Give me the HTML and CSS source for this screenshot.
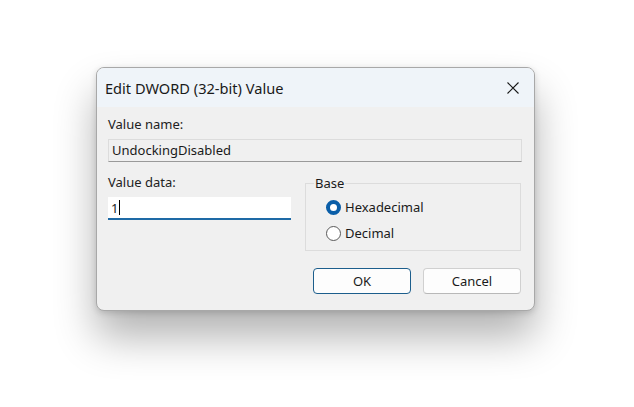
FILE: index.html
```html
<!DOCTYPE html>
<html>
<head>
<meta charset="utf-8">
<link rel="stylesheet" href="styles.css">
</head>
<body>
<div class="dialog">
  <div class="titlebar">
    <span class="title">Edit DWORD (32-bit) Value</span>
    <svg class="close" width="12" height="12" viewBox="0 0 12 12"><path d="M0.5 0.5L11.5 11.5M11.5 0.5L0.5 11.5" stroke="#1a1a1a" stroke-width="1.1" fill="none"/></svg>
  </div>
  <div class="content">
    <div class="label">Value name:</div>
    <div class="namefield">UndockingDisabled</div>
    <div class="row">
      <div class="leftcol">
        <div class="label">Value data:</div>
        <div class="datafield"><span>1</span><span class="caret"></span></div>
      </div>
      <fieldset class="group">
        <legend>Base</legend>
        <div class="radio"><span class="dot checked"></span>Hexadecimal</div>
        <div class="radio"><span class="dot"></span>Decimal</div>
      </fieldset>
    </div>
    <div class="buttons">
      <div class="btn primary">OK</div>
      <div class="btn">Cancel</div>
    </div>
  </div>
</div>
</body>
</html>
```

FILE: styles.css
```css
html, body { margin: 0; background: #ffffff; }
body {
  padding: 67px 0 0 96px;
  font-family: "Noto Sans", "Open Sans", sans-serif;
  color: #1a1a1a;
  height: 407px;
  box-sizing: border-box;
  overflow: hidden;
}
.dialog {
  width: 439px;
  height: 244px;
  box-sizing: border-box;
  border: 1px solid #a8a8a8;
  border-radius: 8px;
  background: #f0f0f0;
  box-shadow: 0 26px 42px rgba(0,0,0,0.3), 0 2px 6px rgba(0,0,0,0.15);
  overflow: hidden;
}
.titlebar {
  height: 39px;
  background: #eff4f9;
  display: flex;
  align-items: center;
  justify-content: space-between;
  padding: 0 15px 0 8px;
}
.title { font-size: 14.6px; color: #1a1a1a; }
.close { display: block; }
.content { padding: 9px 12px 0 11px; }
.label { font-size: 13px; line-height: 16px; color: #222; }
.namefield {
  margin-top: 7px;
  height: 23px;
  box-sizing: border-box;
  border: 1px solid #dcdcdc;
  border-bottom-color: #9a9a9a;
  padding-left: 3px;
  font-size: 13px;
  line-height: 21px;
}
.row {
  display: grid;
  grid-template-columns: 183px 216px;
  column-gap: 14px;
  margin-top: 12px;
}
.datafield {
  margin-top: 7px;
  height: 23px;
  box-sizing: border-box;
  background: #fff;
  border-bottom: 2px solid #1e6aa6;
  padding-left: 3px;
  font-size: 13px;
  line-height: 22px;
  display: flex;
  align-items: center;
}
.caret { display: inline-block; width: 1px; height: 15px; background: #000; margin-left: 1px; }
.group {
  margin: 0;
  padding: 0 0 0 20px;
  border: 1px solid #dcdcdc;
  height: 77px;
  box-sizing: border-box;
  min-width: 0;
}
.group legend { font-size: 13px; padding: 0 1px; margin-left: -12px; line-height: 18px; }
.radio {
  display: flex;
  align-items: center;
  font-size: 13px;
  height: 26px;
}
.radio:first-of-type { margin-top: 2px; }
.dot {
  width: 15px; height: 15px;
  box-sizing: border-box;
  border: 1px solid #5a5a5a;
  border-radius: 50%;
  margin-right: 4px;
  background: #fff;
}
.dot.checked {
  border: 4px solid #0a5ea8;
  background: #fff;
}
.buttons {
  display: flex;
  justify-content: flex-end;
  gap: 12px;
  margin-top: 17px;
  padding-right: 1px;
}
.btn {
  width: 98px;
  height: 26px;
  box-sizing: border-box;
  border: 1px solid #d0d0d0;
  border-bottom-color: #b8b8b8;
  border-radius: 4px;
  background: #fdfdfd;
  font-size: 13px;
  text-align: center;
  line-height: 24px;
}
.btn.primary { border: 1px solid #1c5e8c; }
```
